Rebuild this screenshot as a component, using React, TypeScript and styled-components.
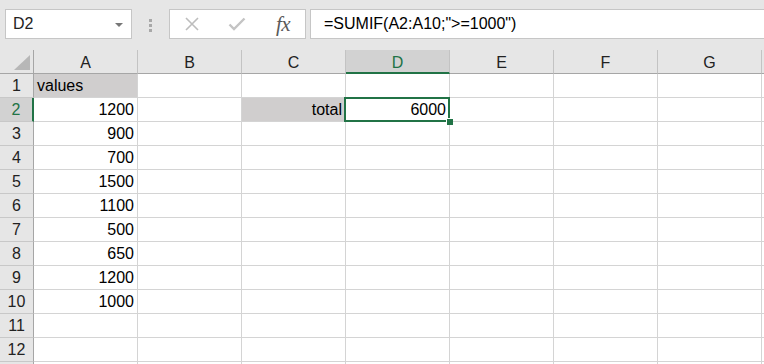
import React from "react";
import styled, { createGlobalStyle, css } from "styled-components";

const Global = createGlobalStyle`
  html, body { margin: 0; padding: 0; background: #e6e6e6; }
  body { font-family: "Liberation Sans", Arial, sans-serif; font-size: 16px; color: #000; }
  * { box-sizing: border-box; }
`;

const Page = styled.div`
  width: 764px;
  height: 364px;
  overflow: hidden;
  background: #e6e6e6;
  display: flex;
  flex-direction: column;
`;

const Toolbar = styled.div`
  height: 50px;
  flex: none;
  display: flex;
  align-items: flex-start;
  padding: 9px 0 0 5px;
`;

const NameBox = styled.div`
  width: 127px;
  height: 30px;
  background: #fff;
  border: 1px solid #c6c6c6;
  display: flex;
  align-items: center;
  justify-content: space-between;
  padding: 0 8px 0 7px;
  color: #222;
`;

const Caret = styled.span`
  width: 0;
  height: 0;
  border-left: 4px solid transparent;
  border-right: 4px solid transparent;
  border-top: 4px solid #777;
  margin-top: 1px;
`;

const Grip = styled.div`
  width: 37px;
  height: 30px;
  display: flex;
  flex-direction: column;
  align-items: center;
  justify-content: center;
  gap: 2px;
  padding-top: 2px;
  span {
    width: 3px;
    height: 3px;
    background: #a8a8a8;
  }
`;

const FxBox = styled.div`
  width: 137px;
  height: 30px;
  background: #fff;
  border: 1px solid #c6c6c6;
  display: flex;
  align-items: center;
  padding-left: 14px;
  gap: 28px;
`;

const FxText = styled.span`
  font-family: "Liberation Serif", "Times New Roman", serif;
  font-style: italic;
  font-size: 21px;
  color: #5a5a5a;
  margin-left: 2px;
  letter-spacing: -0.5px;
`;

const FormulaBox = styled.div`
  flex: 1;
  margin-left: 4px;
  height: 30px;
  background: #fff;
  border: 1px solid #c6c6c6;
  border-right: none;
  display: flex;
  align-items: center;
  padding-left: 13px;
  color: #000;
  white-space: nowrap;
`;

const Grid = styled.div`
  display: grid;
  grid-template-columns: 34px repeat(8, 104px);
  grid-auto-rows: 24px;
  background: #fff;
`;

const Corner = styled.div`
  background: #e6e6e6;
  border-right: 1px solid #a6a6a6;
  border-bottom: 1px solid #a6a6a6;
  position: relative;
  &::after {
    content: "";
    position: absolute;
    right: 3px;
    bottom: 3px;
    width: 0;
    height: 0;
    border-left: 16px solid transparent;
    border-bottom: 15px solid #b7b7b7;
  }
`;

const ColHead = styled.div<{ $active?: boolean }>`
  background: #e6e6e6;
  border-right: 1px solid #c3c3c3;
  border-bottom: 1px solid #a6a6a6;
  display: flex;
  align-items: center;
  justify-content: center;
  padding-top: 3px;
  color: #222;
  ${(p) =>
    p.$active &&
    css`
      background: #d2d2d2;
      color: #217346;
      border-bottom: 2px solid #217346;
      padding-top: 4px;
    `}
`;

const RowHead = styled.div<{ $active?: boolean }>`
  background: #e6e6e6;
  border-right: 1px solid #a6a6a6;
  border-bottom: 1px solid #c8c8c8;
  display: flex;
  align-items: center;
  justify-content: center;
  padding-top: 1px;
  color: #222;
  ${(p) =>
    p.$active &&
    css`
      background: #d2d2d2;
      color: #217346;
      border-right: 2px solid #217346;
    `}
`;

const Cell = styled.div<{ $align?: "left" | "right"; $fill?: boolean; $selected?: boolean }>`
  position: relative;
  z-index: ${(p) => (p.$selected ? 2 : "auto")};
  background: ${(p) => (p.$fill ? "#d0cece" : "#fff")};
  border-right: 1px solid #d4d4d4;
  border-bottom: 1px solid #d4d4d4;
  display: flex;
  align-items: center;
  justify-content: ${(p) => (p.$align === "right" ? "flex-end" : "flex-start")};
  padding: 1px 3px 0 3px;
  white-space: nowrap;
`;

const Selection = styled.div`
  position: absolute;
  top: -1px;
  left: -2px;
  right: -1px;
  bottom: -1px;
  border: 2px solid #217346;
  pointer-events: none;
`;

const Handle = styled.div`
  position: absolute;
  right: -5px;
  bottom: -5px;
  width: 7px;
  height: 7px;
  background: #217346;
  border-top: 1px solid #fff;
  border-left: 1px solid #fff;
`;

const cols = ["A", "B", "C", "D", "E", "F", "G", "H"];
const values: (number | string | null)[] = [
  "values",
  1200,
  900,
  700,
  1500,
  1100,
  500,
  650,
  1200,
  1000,
  null,
  null,
  null,
];

const XIcon = () => (
  <svg width="16" height="16" viewBox="0 0 16 16">
    <path d="M2 2 L14 14 M14 2 L2 14" stroke="#bdbdbd" strokeWidth="1.6" fill="none" />
  </svg>
);

const CheckIcon = () => (
  <svg width="18" height="16" viewBox="0 0 18 16">
    <path d="M1.5 8.5 L6 13 L16.5 2.5" stroke="#c4c4c4" strokeWidth="2.4" fill="none" />
  </svg>
);

export default function App() {
  return (
    <Page>
      <Global />
      <Toolbar>
        <NameBox>
          <span>D2</span>
          <Caret />
        </NameBox>
        <Grip>
          <span />
          <span />
          <span />
        </Grip>
        <FxBox>
          <XIcon />
          <CheckIcon />
          <FxText>fx</FxText>
        </FxBox>
        <FormulaBox>=SUMIF(A2:A10;"&gt;=1000")</FormulaBox>
      </Toolbar>
      <Grid>
        <Corner />
        {cols.map((c) => (
          <ColHead key={c} $active={c === "D"}>
            {c === "H" ? "" : c}
          </ColHead>
        ))}
        {values.map((v, i) => {
          const row = i + 1;
          return (
            <React.Fragment key={row}>
              <RowHead $active={row === 2}>{row <= 12 ? row : ""}</RowHead>
              {cols.map((c) => {
                if (c === "A") {
                  return (
                    <Cell
                      key={c}
                      $fill={row === 1}
                      $align={typeof v === "number" ? "right" : "left"}
                    >
                      {v}
                    </Cell>
                  );
                }
                if (c === "C" && row === 2) {
                  return (
                    <Cell key={c} $fill $align="right">
                      total
                    </Cell>
                  );
                }
                if (c === "D" && row === 2) {
                  return (
                    <Cell key={c} $align="right" $selected>
                      6000
                      <Selection>
                        <Handle />
                      </Selection>
                    </Cell>
                  );
                }
                return <Cell key={c} />;
              })}
            </React.Fragment>
          );
        })}
      </Grid>
    </Page>
  );
}
